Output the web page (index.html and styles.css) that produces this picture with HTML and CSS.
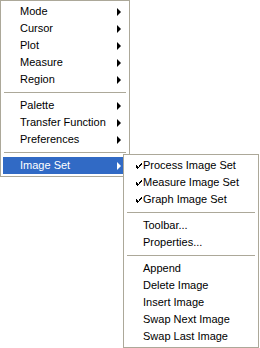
FILE: index.html
```html
<!DOCTYPE html>
<html>
<head>
<meta charset="utf-8">
<link rel="stylesheet" href="styles.css">
</head>
<body>
<div class="stage">
  <div class="menu main">
    <div class="item"><span class="label">Mode</span><span class="arrow"></span></div>
    <div class="item"><span class="label">Cursor</span><span class="arrow"></span></div>
    <div class="item"><span class="label">Plot</span><span class="arrow"></span></div>
    <div class="item"><span class="label">Measure</span><span class="arrow"></span></div>
    <div class="item"><span class="label">Region</span><span class="arrow"></span></div>
    <div class="sep"></div>
    <div class="item"><span class="label">Palette</span><span class="arrow"></span></div>
    <div class="item"><span class="label">Transfer Function</span><span class="arrow"></span></div>
    <div class="item"><span class="label">Preferences</span><span class="arrow"></span></div>
    <div class="sep"></div>
    <div class="item active"><span class="label">Image Set</span><span class="arrow"></span></div>
  </div>
  <div class="menu sub">
    <div class="item"><svg class="check" width="6" height="6" viewBox="0 0 6 6"><path d="M0 2h1v1h1v1h1v-2h1v-1h1v-1h1v2h-1v1h-1v1h-1v1h-1v1h-1v-1h-1v-1h-1z"/></svg><span class="label">Process Image Set</span></div>
    <div class="item"><svg class="check" width="6" height="6" viewBox="0 0 6 6"><path d="M0 2h1v1h1v1h1v-2h1v-1h1v-1h1v2h-1v1h-1v1h-1v1h-1v1h-1v-1h-1v-1h-1z"/></svg><span class="label">Measure Image Set</span></div>
    <div class="item"><svg class="check" width="6" height="6" viewBox="0 0 6 6"><path d="M0 2h1v1h1v1h1v-2h1v-1h1v-1h1v2h-1v1h-1v1h-1v1h-1v1h-1v-1h-1v-1h-1z"/></svg><span class="label">Graph Image Set</span></div>
    <div class="sep"></div>
    <div class="item"><span class="label">Toolbar...</span></div>
    <div class="item"><span class="label">Properties...</span></div>
    <div class="sep"></div>
    <div class="item"><span class="label">Append</span></div>
    <div class="item"><span class="label">Delete Image</span></div>
    <div class="item"><span class="label">Insert Image</span></div>
    <div class="item"><span class="label">Swap Next Image</span></div>
    <div class="item"><span class="label">Swap Last Image</span></div>
  </div>
</div>
</body>
</html>
```
FILE: styles.css
```css
html, body {
  margin: 0;
  padding: 0;
  background: #ffffff;
}
.stage {
  position: relative;
  width: 260px;
  height: 348px;
  font-family: "Liberation Sans", Arial, sans-serif;
  font-size: 11px;
  color: #000000;
}
.menu {
  box-sizing: border-box;
  background: #ffffff;
  border: 1px solid #aca899;
  padding: 2px;
  display: flex;
  flex-direction: column;
}
.main {
  width: 130px;
  height: 177px;
}
.sub {
  position: absolute;
  left: 123px;
  top: 154px;
  width: 136px;
  height: 194px;
}
.item {
  position: relative;
  height: 17px;
  display: flex;
  align-items: center;
  padding-left: 17px;
  white-space: nowrap;
}
.item.active {
  background: #316ac5;
  color: #ffffff;
}
.label {
  line-height: 17px;
}
.arrow {
  position: absolute;
  right: 6px;
  top: 5px;
  width: 0;
  height: 0;
  border-top: 4px solid transparent;
  border-bottom: 4px solid transparent;
  border-left: 4px solid #000000;
}
.active .arrow {
  border-left-color: #ffffff;
}
.check {
  position: absolute;
  left: 10px;
  top: 6px;
  fill: #000000;
}
.sep {
  height: 9px;
  display: flex;
  align-items: center;
  padding: 0 1px;
}
.sep::before {
  content: "";
  flex: 1;
  height: 1px;
  background: #aca899;
}
```
